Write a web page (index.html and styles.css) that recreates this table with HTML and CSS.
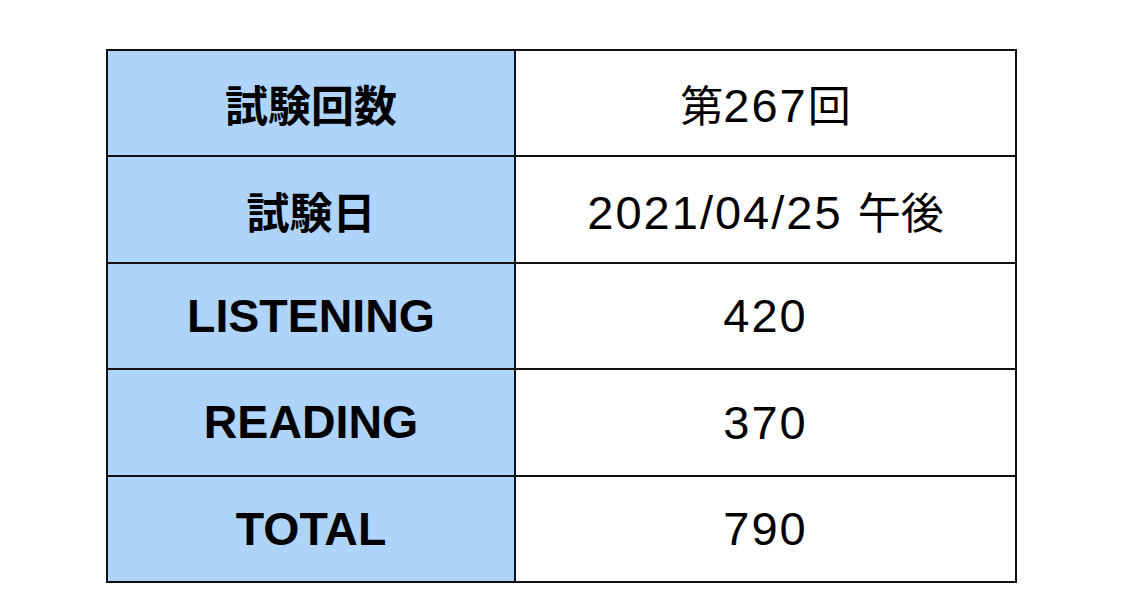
FILE: index.html
```html
<!DOCTYPE html>
<html lang="ja">
<head>
<meta charset="utf-8">
<link rel="stylesheet" href="styles.css">
</head>
<body>
<table class="score">
  <tr><th class="ja">試験回数</th><td><span class="ja">第</span>267<span class="ja">回</span></td></tr>
  <tr><th class="ja">試験日</th><td>2021/04/25 <span class="ja">午後</span></td></tr>
  <tr><th>LISTENING</th><td>420</td></tr>
  <tr><th>READING</th><td>370</td></tr>
  <tr><th>TOTAL</th><td>790</td></tr>
</table>
</body>
</html>
```
FILE: styles.css
```css
html, body {
  margin: 0;
  padding: 0;
  background: #fff;
}
body {
  padding: 49px 0 0 106px;
  font-family: "Liberation Sans", "Noto Sans CJK JP", sans-serif;
}
.score {
  border-collapse: collapse;
  width: 911px;
}
.score th, .score td {
  border: 2px solid #111;
  height: 104.4px;
  padding: 0;
  text-align: center;
  vertical-align: middle;
  color: #000;
}
.score th {
  width: 406px;
  background: #aed4fb;
  font-weight: bold;
  font-size: 46.5px;
}
.score th.ja {
  font-size: 43px;
}
.score td {
  font-weight: normal;
  background: #fff;
  font-size: 47px;
  letter-spacing: 2px;
}
.score td .ja {
  font-size: 43px;
  letter-spacing: 0;
}
```
